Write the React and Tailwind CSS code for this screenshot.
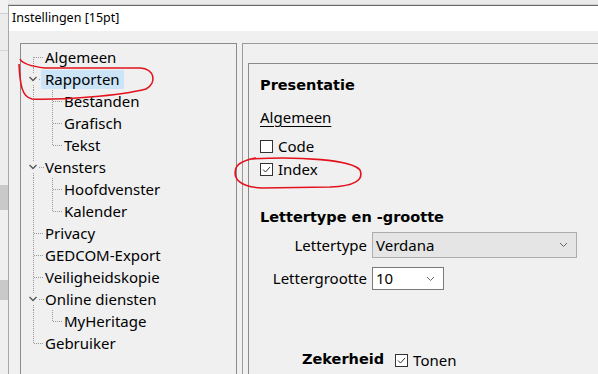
import React from "react";

const tree = [
  { label: "Algemeen", level: 0, first: true },
  { label: "Rapporten", level: 0, open: true, selected: true },
  { label: "Bestanden", level: 1 },
  { label: "Grafisch", level: 1 },
  { label: "Tekst", level: 1, last: true },
  { label: "Vensters", level: 0, open: true },
  { label: "Hoofdvenster", level: 1 },
  { label: "Kalender", level: 1, last: true },
  { label: "Privacy", level: 0 },
  { label: "GEDCOM-Export", level: 0 },
  { label: "Veiligheidskopie", level: 0 },
  { label: "Online diensten", level: 0, open: true },
  { label: "MyHeritage", level: 1, last: true },
  { label: "Gebruiker", level: 0, last: true },
];

const dot = { stroke: "#9a9a9a", strokeWidth: 1, strokeDasharray: "1 1", shapeRendering: "crispEdges" };

const Gutter = ({ item }) => {
  const w = item.level === 0 ? 24 : 43;
  const top = item.first ? 11 : 0;
  const bottom = item.last && item.level === 0 ? 11 : 22;
  return (
    <svg width={w} height="22" className="shrink-0">
      {item.open ? (
        <>
          <line x1="12.5" y1="0" x2="12.5" y2="6" style={dot} />
          <line x1="12.5" y1="17" x2="12.5" y2="22" style={dot} />
          <line x1="18" y1="11.5" x2="23" y2="11.5" style={dot} />
          <path d="M8.5 9 L12 12.5 L15.5 9" fill="none" stroke="#555" strokeWidth="1.3" />
        </>
      ) : (
        <line x1="12.5" y1={top} x2="12.5" y2={bottom} style={dot} />
      )}
      {item.level === 0 && !item.open && <line x1="13" y1="11.5" x2="23" y2="11.5" style={dot} />}
      {item.level === 1 && (
        <>
          <line x1="31.5" y1="0" x2="31.5" y2={item.last ? 11 : 22} style={dot} />
          <line x1="32" y1="11.5" x2="42" y2="11.5" style={dot} />
        </>
      )}
    </svg>
  );
};

const Check = ({ checked }) => (
  <span className="w-[13px] h-[13px] border border-[#333] bg-white flex items-center justify-center shrink-0">
    {checked && (
      <svg width="11" height="11" viewBox="0 0 11 11">
        <path d="M2 5.5 L4.5 8 L9 3" fill="none" stroke="#333" strokeWidth="1" />
      </svg>
    )}
  </span>
);

const Chevron = () => (
  <svg width="9" height="6" viewBox="0 0 9 6">
    <path d="M1 1 L4.5 4.5 L8 1" fill="none" stroke="#666" strokeWidth="1" />
  </svg>
);

export default function App() {
  const ui = { fontFamily: '"Noto Sans", "Open Sans", sans-serif' };
  const head = { fontFamily: '"DejaVu Sans", Verdana, sans-serif' };
  return (
    <div className="w-[598px] h-[374px] overflow-hidden bg-[#e4e4e4] relative flex" style={ui}>
      <div className="w-[8px] shrink-0 flex flex-col">
        <div className="h-[13px] bg-[#f2f2f2]" />
        <div className="h-[37px] bg-[#ececec] border-t border-[#cfcfcf]" />
        <div className="h-[135px] bg-[#ededed] border-t border-[#d6d6d6]" />
        <div className="h-[25px] bg-[#c9c9c9]" />
        <div className="h-[70px] bg-[#efefef]" />
        <div className="h-[20px] bg-[#c9c9c9]" />
        <div className="flex-1 bg-[#efefef]" />
      </div>
      <div className="flex-1 flex flex-col">
        <div className="h-[5px] bg-[#eaeaea] border-b border-[#d0d0d0]" />
        <div className="flex-1 flex flex-col border-t border-l border-t-[#6a6a6a] border-l-[#a8a8a8] bg-[#f0f0f0]">
          <div className="h-[25px] bg-white flex items-center pl-[3px] text-[12.5px] text-black">
            Instellingen [15pt]
          </div>
          <div className="flex pt-[12px] pl-[11px] flex-1">
            <div className="w-[217px] border-t border-l border-r border-[#8c8c8c] pt-[2px] shrink-0">
              {tree.map((item) => (
                <div key={item.label} className="h-[22px] flex items-center">
                  <Gutter item={item} />
                  <span
                    className={`text-[15px] leading-[19px] px-[4px] -ml-[4px] text-black ${
                      item.selected ? "bg-[#cce4f7]" : ""
                    }`}
                  >
                    {item.label}
                  </span>
                </div>
              ))}
            </div>
            <div className="flex-1 ml-[5px] border-t border-l border-[#9c9c9c] pt-[19px] pl-[5px] flex">
              <div className="flex-1 border-t border-l border-[#8a8a8a] pl-[11px] text-black">
                <div className="mt-[12px] h-[20px] flex items-center text-[14.5px] font-bold" style={head}>
                  Presentatie
                </div>
                <div className="mt-[11px] h-[20px] flex items-center text-[15px] underline underline-offset-[3px]">
                  Algemeen
                </div>
                <div className="mt-[9px] h-[20px] flex items-center gap-[5px] text-[15px]">
                  <Check />
                  <span>Code</span>
                </div>
                <div className="mt-[3px] h-[20px] flex items-center gap-[5px] text-[15px]">
                  <Check checked />
                  <span>Index</span>
                </div>
                <div className="mt-[29px] h-[20px] flex items-center text-[14.5px] font-bold" style={head}>
                  Lettertype en -grootte
                </div>
                <div className="mt-[4px] flex items-center text-[15px]">
                  <span className="w-[107px] text-right">Lettertype</span>
                  <div className="ml-[5px] w-[205px] h-[26px] bg-[#e5e5e5] border border-[#adadad] flex items-center justify-between pl-[3px] pr-[8px]">
                    <span>Verdana</span>
                    <Chevron />
                  </div>
                </div>
                <div className="mt-[9px] flex items-center text-[15px]">
                  <span className="w-[107px] text-right">Lettergrootte</span>
                  <div className="ml-[5px] w-[72px] h-[23px] bg-white border border-[#7a7a7a] flex items-center justify-between pl-[3px] pr-[8px]">
                    <span>10</span>
                    <Chevron />
                  </div>
                </div>
                <div className="mt-[60px] h-[20px] flex items-center pl-[42px] text-[15px]">
                  <span className="font-bold text-[14.5px]" style={head}>
                    Zekerheid
                  </span>
                  <span className="ml-[11px]">
                    <Check checked />
                  </span>
                  <span className="ml-[5px]">Tonen</span>
                </div>
              </div>
            </div>
          </div>
        </div>
      </div>
      <svg className="absolute inset-0 pointer-events-none" width="598" height="374">
        <path
          d="M20 59 C 22 63, 28 66, 45 68 L 140 68 C 155 69, 157 83, 146 89 C 120 96, 60 100, 32 99 C 22 97, 20 85, 19 64"
          fill="none"
          stroke="#e3121c"
          strokeWidth="1.6"
        />
        <path
          d="M250 159 C 300 156, 352 160, 360 170 C 364 180, 355 186, 330 187 L 262 188 C 242 187, 232 180, 236 168 C 238 163, 245 160, 256 158"
          fill="none"
          stroke="#e3121c"
          strokeWidth="1.6"
        />
      </svg>
    </div>
  );
}
